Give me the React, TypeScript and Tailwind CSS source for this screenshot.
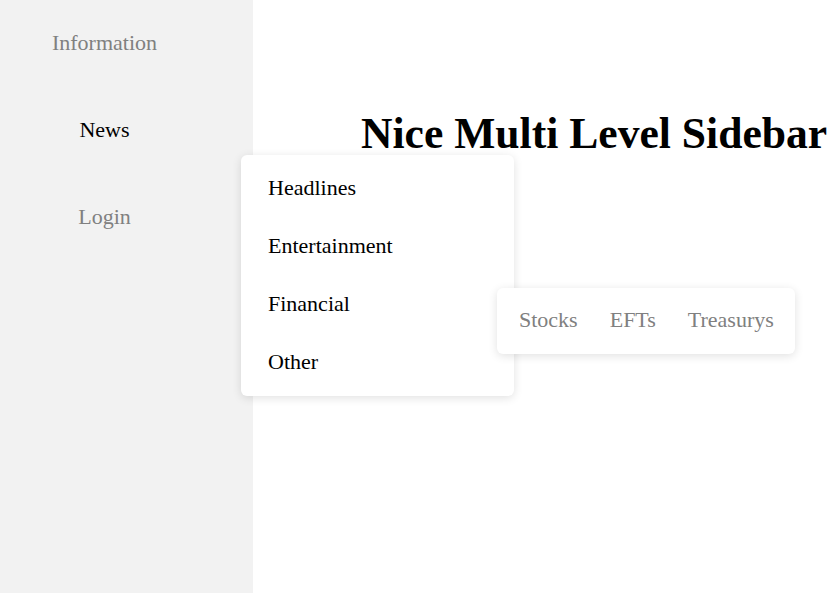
import React from "react";

// sidebar entries, News is the one that is open
const mainItems = [
  { label: "Information", active: false },
  { label: "News", active: true },
  { label: "Login", active: false },
];

const newsItems = ["Headlines", "Entertainment", "Financial", "Other"];
const financialItems = ["Stocks", "EFTs", "Treasurys"];

export default function App() {
  return (
    <div
      className="relative flex w-[830px] h-[593px] overflow-hidden bg-white"
      style={{ fontFamily: '"Liberation Serif", "Times New Roman", serif' }}
    >
      {/* sidebar */}
      <aside className="w-[253px] h-full bg-[#f2f2f2] shrink-0">
        <ul className="w-[209px] text-center text-[22px]">
          {mainItems.map((item) => (
            <li
              key={item.label}
              className={`h-[87px] flex items-center justify-center pb-[2px] ${
                item.active ? "text-black" : "text-[#808080]"
              }`}
            >
              {item.label}
            </li>
          ))}
        </ul>
      </aside>

      {/* main content */}
      <main className="flex-1 min-w-0 pl-[108px] pt-[108px]">
        <h1 className="text-[43.6px] font-bold leading-[50px] text-black whitespace-nowrap">
          Nice Multi Level Sidebar
        </h1>
      </main>

      {/* first level flyout */}
      <div className="absolute left-[241px] top-[155px] w-[273px] h-[241px] bg-white rounded-[6px] shadow-[0_2px_10px_rgba(0,0,0,0.12)] pt-[3px]">
        <ul className="text-[22px] text-black">
          {newsItems.map((label) => (
            <li key={label} className="h-[58px] flex items-center pl-[27px]">
              {label}
            </li>
          ))}
        </ul>
      </div>

      {/* second level flyout */}
      <div className="absolute left-[497px] top-[288px] w-[298px] h-[66px] bg-white rounded-[6px] shadow-[0_2px_10px_rgba(0,0,0,0.12)] flex items-center px-[22px] pb-1 gap-[32px]">
        {financialItems.map((label) => (
          <span key={label} className="text-[22px] text-[#808080]">
            {label}
          </span>
        ))}
      </div>
    </div>
  );
}
